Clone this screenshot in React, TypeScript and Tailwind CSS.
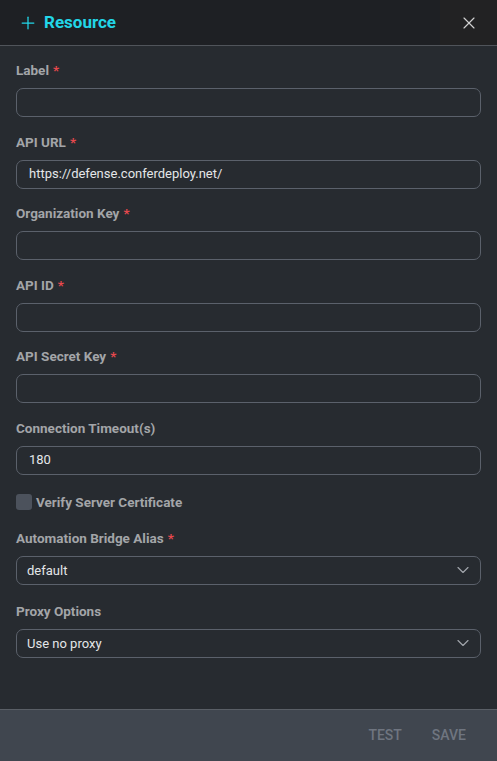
import { X, Plus, ChevronDown } from "lucide-react";

type Field = {
  label: string;
  required?: boolean;
  value?: string;
};

const fields: Field[] = [
  { label: "Label", required: true },
  { label: "API URL", required: true, value: "https://defense.conferdeploy.net/" },
  { label: "Organization Key", required: true },
  { label: "API ID", required: true },
  { label: "API Secret Key", required: true },
  { label: "Connection Timeout(s)", value: "180" },
];

function FieldLabel({ label, required }: { label: string; required?: boolean }) {
  return (
    <div className="h-[20px] text-[13.5px] font-bold leading-[20px] text-[#a3a5a8]">
      {label}
      {required ? <span className="ml-1 text-[#e5484d]">*</span> : null}
    </div>
  );
}

function TextField({ label, required, value }: Field) {
  return (
    <div className="flex flex-col gap-[8px]">
      <FieldLabel label={label} required={required} />
      <div className="flex h-[29px] items-center rounded-[7px] border border-[#5b616b] px-[12px] text-[13px] text-[#e4e6e8]">
        {value}
      </div>
    </div>
  );
}

function SelectField({ label, required, value }: Field) {
  return (
    <div className="flex flex-col gap-[8px]">
      <FieldLabel label={label} required={required} />
      <div className="flex h-[29px] items-center justify-between rounded-[7px] border border-[#5b616b] pl-[10px] pr-[7px] text-[13px] text-[#e4e6e8]">
        <span>{value}</span>
        <ChevronDown size={20} strokeWidth={1.4} className="text-[#a0a4aa]" />
      </div>
    </div>
  );
}

export default function App() {
  return (
    <div
      className="flex h-[761px] w-[497px] flex-col bg-[#272b30]"
      style={{ fontFamily: "Roboto, 'Liberation Sans', sans-serif" }}
    >
      <header className="flex h-[46px] items-stretch border-b border-[#50545a] bg-[#1e2024]">
        <div className="flex flex-1 items-center gap-[6px] pl-[18px]">
          <Plus size={20} strokeWidth={1.5} className="text-[#22d6e8]" />
          <span className="text-[17px] font-bold text-[#22d6e8]">Resource</span>
        </div>
        <button className="flex w-[57px] items-center justify-center bg-[#222223] text-[#d0d0d0]">
          <X size={20} strokeWidth={1.4} />
        </button>
      </header>

      <div className="flex flex-1 flex-col gap-[14.5px] px-[16px] pt-[14px]">
        {fields.map((f) => (
          <TextField key={f.label} {...f} />
        ))}
        <label className="mt-[3px] flex items-center gap-[4px] text-[13.5px] font-bold text-[#a3a5a8]">
          <span className="h-[16px] w-[16px] rounded-[3px] bg-[#4c525c]" />
          Verify Server Certificate
        </label>
        <div className="mt-[1px] flex flex-col gap-[16px]">
          <SelectField label="Automation Bridge Alias" required value="default" />
          <SelectField label="Proxy Options" value="Use no proxy" />
        </div>
      </div>

      <footer className="flex h-[52px] items-center justify-end gap-[30px] border-t border-[#5a5f66] bg-[#40464f] pr-[31px] text-[14px] font-medium text-[#6f7580]">
        <span>TEST</span>
        <span>SAVE</span>
      </footer>
    </div>
  );
}
